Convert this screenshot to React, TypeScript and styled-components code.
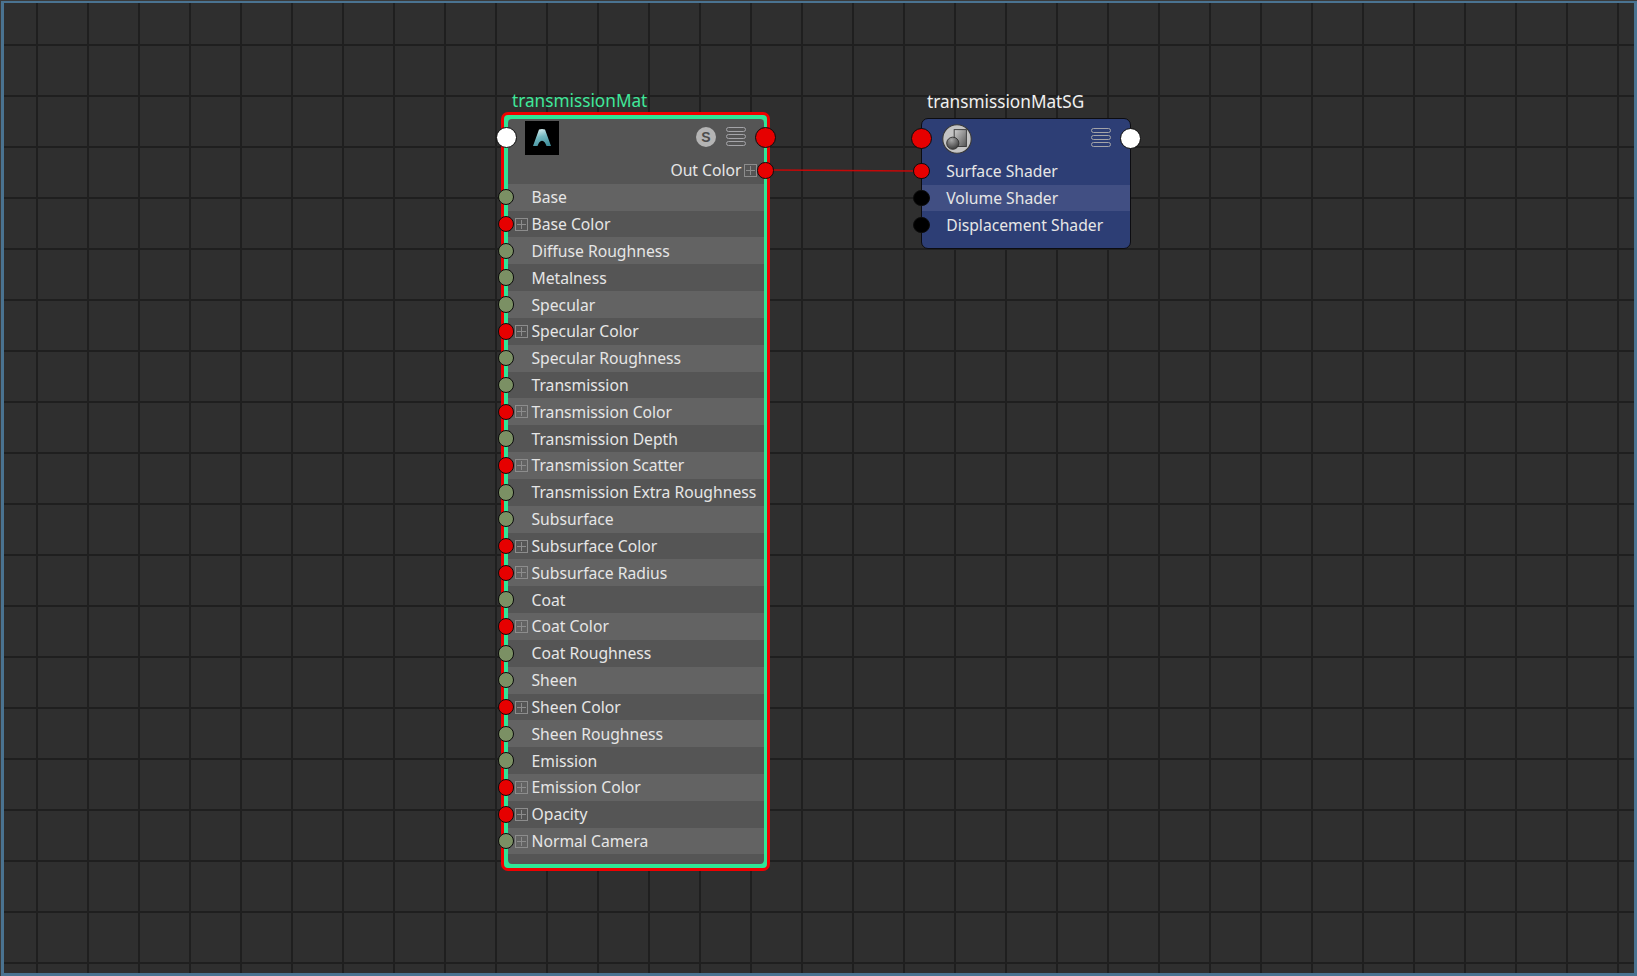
import React from "react";
import styled, { createGlobalStyle } from "styled-components";

const Global = createGlobalStyle`
  html, body { margin: 0; padding: 0; background: #3a3a3a; }
  #root { width: 1637px; height: 976px; overflow: hidden; }
`;

const Frame = styled.div`
  box-sizing: border-box;
  width: 1635.5px;
  height: 974.7px;
  margin: 1px 0 0 1px;
  border-style: solid;
  border-color: #4a7391;
  border-width: 2px 3px 3px 3px;
`;

const Canvas = styled.div`
  position: relative;
  width: 100%;
  height: 100%;
  overflow: hidden;
  font-family: "Noto Sans", "Open Sans", sans-serif;
  background-color: #2f2f2f;
  background-image:
    linear-gradient(90deg, transparent 49px, #1f1f1f 49px),
    linear-gradient(180deg, #1f1f1f 2px, transparent 2px);
  background-size: 51px 100%, 100% 51px;
  background-position: -17px 0, 0 -10px;
`;

const NodeWrap = styled.div<{ $x: number; $y: number; $w: number }>`
  position: absolute;
  left: ${(p) => p.$x}px;
  top: ${(p) => p.$y}px;
  width: ${(p) => p.$w}px;
  display: flex;
  flex-direction: column;
`;

const Title = styled.div<{ $indent: number; $gap: number; $color: string }>`
  margin: 0 0 ${(p) => p.$gap}px ${(p) => p.$indent}px;
  font-size: 17.2px;
  line-height: 24px;
  color: ${(p) => p.$color};
  white-space: nowrap;
`;

const MaterialBorder = styled.div`
  box-sizing: border-box;
  margin-top: -1px;
  border: 3.7px solid #f00000;
  border-radius: 7px;
  background: #2fe596;
  padding: 3.5px;
`;

const MaterialBody = styled.div`
  position: relative;
  display: flex;
  flex-direction: column;
  border-radius: 4px;
  padding-bottom: 10px;
  background: #555555;
`;

const Port = styled.span<{ $big?: boolean; $color: string }>`
  position: absolute;
  box-sizing: border-box;
  width: ${(p) => (p.$big ? 21 : 16.5)}px;
  height: ${(p) => (p.$big ? 21 : 16.5)}px;
  border-radius: 50%;
  border: 1.5px solid #0c0c0c;
  background: ${(p) => p.$color};
`;

const MatPortLeft = styled(Port)`
  left: -12px;
  top: 8.5px;
`;
const MatPortRight = styled(Port)`
  right: -12.5px;
  top: 8.5px;
`;
const GroupPortLeft = styled(Port)`
  left: -10.5px;
  top: 8.5px;
`;
const GroupPortRight = styled(Port)`
  right: -11.5px;
  top: 8.5px;
`;

const MatHeader = styled.div`
  box-sizing: border-box;
  height: 38.6px;
  padding: 2px 18px 0 17px;
  display: flex;
  align-items: flex-start;
  gap: 9.7px;
`;

const Logo = styled.div`
  width: 34px;
  height: 34px;
  margin-right: auto;
  background: #000;
  display: flex;
  align-items: center;
  justify-content: center;
`;

const MenuIcon = styled.div`
  margin-top: 6px;
  display: flex;
  flex-direction: column;
  gap: 2px;
`;

const Pill = styled.span`
  display: block;
  box-sizing: border-box;
  width: 20px;
  height: 5px;
  border: 1px solid #a4a4a8;
  border-radius: 2.5px;
`;

const SoloBadge = styled.div`
  margin-top: 6px;
  width: 20px;
  height: 20px;
  border-radius: 50%;
  background: #b4b4b4;
  color: #4c4c4c;
  font-family: "Liberation Sans", sans-serif;
  font-size: 14px;
  font-weight: 700;
  line-height: 20px;
  text-align: center;
`;

const OutRow = styled.div`
  position: relative;
  box-sizing: border-box;
  height: 26.7px;
  display: flex;
  align-items: center;
  justify-content: flex-end;
  gap: 2px;
  padding-right: 7px;
  font-size: 15.7px;
  color: #e6e6e6;
`;

const OutPort = styled(Port)`
  right: -10.2px;
  top: 5px;
`;

const Rows = styled.div`
  display: flex;
  flex-direction: column;
`;

const Row = styled.div<{ $light: boolean }>`
  position: relative;
  box-sizing: border-box;
  height: 26.84px;
  padding-left: 24px;
  display: flex;
  align-items: center;
  font-size: 15.7px;
  color: #e6e6e6;
  white-space: nowrap;
  background: ${(p) => (p.$light ? "#636363" : "#555555")};
`;

const RowPort = styled(Port)`
  left: -9.7px;
  top: 5.2px;
`;

const Expand = styled.span`
  position: relative;
  display: inline-block;
  box-sizing: border-box;
  width: 13px;
  height: 13px;
  flex: none;
  border: 1px solid #8c8c8c;
  &::before {
    content: "";
    position: absolute;
    left: 1px;
    right: 1px;
    top: 5px;
    height: 1px;
    background: #8c8c8c;
  }
  &::after {
    content: "";
    position: absolute;
    top: 1px;
    bottom: 1px;
    left: 5px;
    width: 1px;
    background: #8c8c8c;
  }
`;

const RowExpand = styled(Expand)`
  position: absolute;
  left: 7px;
  top: 7px;
`;

const GroupBody = styled.div`
  position: relative;
  box-sizing: border-box;
  height: 131px;
  display: flex;
  flex-direction: column;
  border: 1.5px solid #0c0c10;
  border-radius: 7px;
  background: #2d3e75;
`;

const GroupHeader = styled.div`
  box-sizing: border-box;
  height: 38.7px;
  padding: 4.5px 19px 0 20px;
  display: flex;
  align-items: flex-start;
  justify-content: space-between;
`;

const GroupIcon = styled.div`
  width: 30px;
  height: 30px;
`;

const GroupMenu = styled(MenuIcon)`
  margin-top: 4px;
`;

const GroupRow = styled.div<{ $light: boolean }>`
  position: relative;
  box-sizing: border-box;
  height: 26.84px;
  padding-left: 24.7px;
  display: flex;
  align-items: center;
  font-size: 15.7px;
  color: #e6e6e6;
  white-space: nowrap;
  background: ${(p) => (p.$light ? "#414f83" : "transparent")};
`;

const GroupPort = styled(Port)`
  left: -8.2px;
  top: 5.2px;
`;

const Edge = styled.svg`
  position: absolute;
  left: 769px;
  top: 160px;
  overflow: visible;
`;

const rows: [string, boolean, boolean][] = [
  ["Base", false, false],
  ["Base Color", true, true],
  ["Diffuse Roughness", false, false],
  ["Metalness", false, false],
  ["Specular", false, false],
  ["Specular Color", true, true],
  ["Specular Roughness", false, false],
  ["Transmission", false, false],
  ["Transmission Color", true, true],
  ["Transmission Depth", false, false],
  ["Transmission Scatter", true, true],
  ["Transmission Extra Roughness", false, false],
  ["Subsurface", false, false],
  ["Subsurface Color", true, true],
  ["Subsurface Radius", true, true],
  ["Coat", false, false],
  ["Coat Color", true, true],
  ["Coat Roughness", false, false],
  ["Sheen", false, false],
  ["Sheen Color", true, true],
  ["Sheen Roughness", false, false],
  ["Emission", false, false],
  ["Emission Color", true, true],
  ["Opacity", true, true],
  ["Normal Camera", false, true],
];

const groupRows: [string, string][] = [
  ["Surface Shader", "#e60000"],
  ["Volume Shader", "#000000"],
  ["Displacement Shader", "#000000"],
];

const Pills = () => (
  <>
    <Pill />
    <Pill />
    <Pill />
  </>
);

export default function App() {
  return (
    <Frame>
      <Global />
      <Canvas>
        <Edge width="140" height="14" viewBox="0 0 140 14">
          <path d="M0 7 L140 8" stroke="#c40808" strokeWidth="1.6" fill="none" />
        </Edge>

        <NodeWrap $x={497} $y={86} $w={269}>
          <Title $indent={11} $gap={0} $color="#3fe89a">transmissionMat</Title>
          <MaterialBorder>
            <MaterialBody>
              <MatPortLeft $big $color="#ffffff" />
              <MatPortRight $big $color="#e60000" />
              <MatHeader>
                <Logo>
                  <svg width="22" height="22" viewBox="0 0 22 22">
                    <defs>
                      <linearGradient id="arnold" x1="0.35" y1="0" x2="0.65" y2="1">
                        <stop offset="0" stopColor="#d8eef0" />
                        <stop offset="0.45" stopColor="#74b8c0" />
                        <stop offset="1" stopColor="#3f8f9c" />
                      </linearGradient>
                    </defs>
                    <path
                      d="M8 2.5 Q11 1.5 14 2.5 L20 19 L15.5 19 C14.5 16 13 13.7 11 13.7 C9 13.7 7.5 16 6.5 19 L2 19 Z"
                      fill="url(#arnold)"
                    />
                  </svg>
                </Logo>
                <SoloBadge>S</SoloBadge>
                <MenuIcon>
                  <Pills />
                </MenuIcon>
              </MatHeader>
              <OutRow>
                Out Color
                <Expand />
                <OutPort $color="#e60000" />
              </OutRow>
              <Rows>
                {rows.map(([label, red, expand], i) => (
                  <Row key={label} $light={i % 2 === 0}>
                    <RowPort $color={red ? "#e60000" : "#7b9064"} />
                    {expand && <RowExpand />}
                    {label}
                  </Row>
                ))}
              </Rows>
            </MaterialBody>
          </MaterialBorder>
        </NodeWrap>

        <NodeWrap $x={916.5} $y={87} $w={210}>
          <Title $indent={6.5} $gap={4} $color="#f0f0f0">transmissionMatSG</Title>
          <GroupBody>
            <GroupPortLeft $big $color="#e60000" />
            <GroupPortRight $big $color="#ffffff" />
            <GroupHeader>
              <GroupIcon>
                <svg width="30" height="30" viewBox="0 0 32 32">
                  <defs>
                    <linearGradient id="box" x1="0" y1="0" x2="1" y2="1">
                      <stop offset="0" stopColor="#d0d0d0" />
                      <stop offset="1" stopColor="#555" />
                    </linearGradient>
                    <radialGradient id="ball" cx="0.4" cy="0.25" r="0.85">
                      <stop offset="0" stopColor="#a8a8a8" />
                      <stop offset="1" stopColor="#2e2e2e" />
                    </radialGradient>
                  </defs>
                  <circle cx="16" cy="16" r="15.2" fill="#c4c4c4" stroke="#3a3a3a" strokeWidth="1.2" />
                  <rect x="13" y="6" width="13" height="18" fill="url(#box)" stroke="#3a3a3a" strokeWidth="1" />
                  <circle cx="11.5" cy="20.5" r="6.5" fill="url(#ball)" stroke="#333" strokeWidth="1" />
                </svg>
              </GroupIcon>
              <GroupMenu>
                <Pills />
              </GroupMenu>
            </GroupHeader>
            {groupRows.map(([label, color], i) => (
              <GroupRow key={label} $light={i === 1}>
                <GroupPort $color={color} />
                {label}
              </GroupRow>
            ))}
          </GroupBody>
        </NodeWrap>
      </Canvas>
    </Frame>
  );
}
